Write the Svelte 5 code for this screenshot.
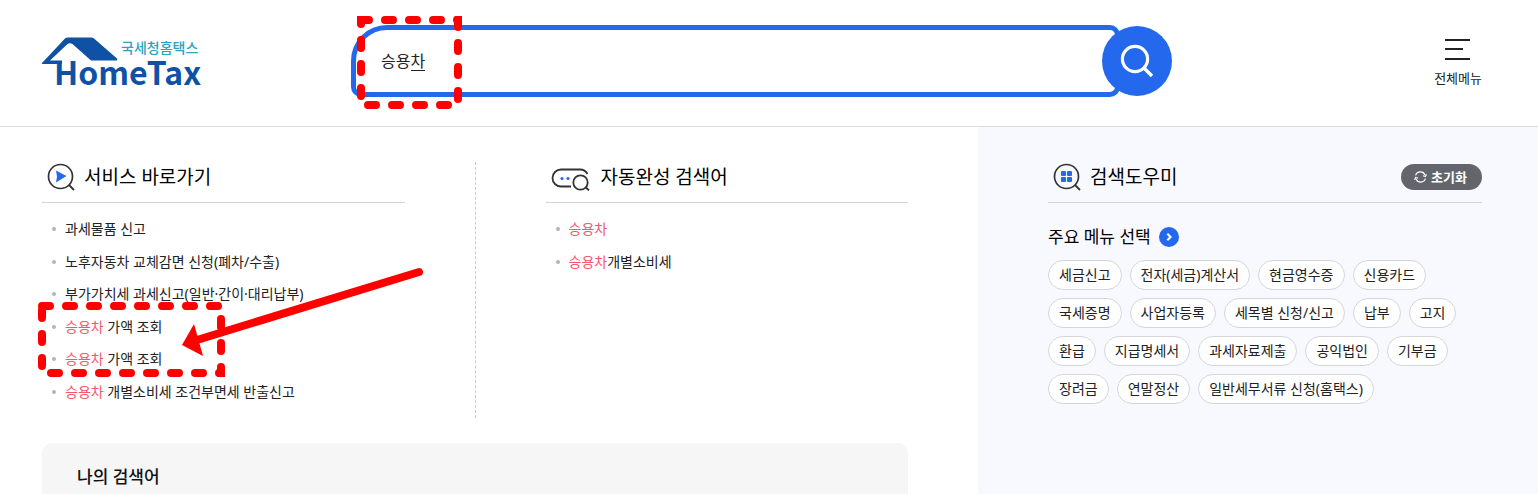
<script lang="ts">
	type Item = { hit?: string; text: string };

	const services: Item[] = [
		{ text: '과세물품 신고' },
		{ text: '노후자동차 교체감면 신청(폐차/수출)' },
		{ text: '부가가치세 과세신고(일반·간이·대리납부)' },
		{ hit: '승용차', text: ' 가액 조회' },
		{ hit: '승용차', text: ' 가액 조회' },
		{ hit: '승용차', text: ' 개별소비세 조건부면세 반출신고' }
	];

	const suggestions: Item[] = [
		{ hit: '승용차', text: '' },
		{ hit: '승용차', text: '개별소비세' }
	];

	const menus = [
		'세금신고', '전자(세금)계산서', '현금영수증', '신용카드',
		'국세증명', '사업자등록', '세목별 신청/신고', '납부', '고지',
		'환급', '지급명세서', '과세자료제출', '공익법인', '기부금',
		'장려금', '연말정산', '일반세무서류 신청(홈택스)'
	];

	let keyword = $state('승용차');
</script>

{#snippet itemList(items: Item[])}
	<ul class="item-list">
		{#each items as item}
			<li><a href="#result">{#if item.hit}<em>{item.hit}</em>{/if}{item.text}</a></li>
		{/each}
	</ul>
{/snippet}

<div class="page">
	<header class="header">
		<a class="logo" href="#home" aria-label="국세청홈택스 HomeTax">
			<svg width="160" height="56" viewBox="0 0 160 56">
				<path d="M0 28 L23 3.5 Q24 2.5 26 2.5 H49 Q51 2.5 52 3.5 L75 23.5 Q76 25.5 74 25.5 H49 L31 9.5 Q28 7 25 9.5 L8 25.5 H20 V29 H2 Q-1 29 0 28 Z" fill="#0f52a5" />
				<text class="logo-ko" x="79" y="18">국세청홈택스</text>
				<text class="logo-en" x="12" y="50">HomeTax</text>
			</svg>
		</a>

		<form class="search" onsubmit={(e) => e.preventDefault()}>
			<div class="search-box">
				<input type="text" aria-label="검색어" bind:value={keyword} />
				<span class="composing"></span>
			</div>
			<button class="search-btn" type="submit" aria-label="검색">
				<svg width="36" height="36" viewBox="0 0 36 36" fill="none" stroke="#fff">
					<circle cx="16" cy="16" r="12.6" stroke-width="3.2" />
					<path d="M25 25 L33 33" stroke-width="3.4" />
				</svg>
			</button>
		</form>

		<button class="all-menu" type="button">
			<svg width="26" height="22" viewBox="0 0 26 22" stroke="#222" stroke-width="2">
				<path d="M0 1 H25 M0 10 H18 M0 20 H25" />
			</svg>
			전체메뉴
		</button>
	</header>

	<main class="main">
		<div class="results">
			<div class="columns">
				<section>
					<div class="heading">
						<svg width="28" height="28" viewBox="0 0 28 28" fill="none">
							<circle cx="13.5" cy="13.5" r="12" stroke="#333" stroke-width="1.7" />
							<path d="M22 22 L27 27" stroke="#333" stroke-width="1.8" />
							<path d="M9 7.5 L19.5 13 L9 19.5 L10 13.5 Z" fill="#2468ee" />
						</svg>
						<h2>서비스 바로가기</h2>
					</div>
					{@render itemList(services)}
				</section>
				<div class="divider"></div>
				<section>
					<div class="heading">
						<svg width="41" height="28" viewBox="3 0 41 28" fill="none">
							<path d="M23 23.5 H13 A8.5 8.5 0 0 1 13 6.5 H32 Q37 6.5 39.5 11" stroke="#333" stroke-width="1.8" />
							<circle cx="32.5" cy="19.5" r="7.2" stroke="#333" stroke-width="1.8" />
							<path d="M37.5 24 L41 27.5" stroke="#333" stroke-width="1.8" />
							<circle cx="14" cy="15.5" r="1.6" fill="#2468ee" />
							<circle cx="20" cy="15.5" r="1.6" fill="#2468ee" />
						</svg>
						<h2>자동완성 검색어</h2>
					</div>
					{@render itemList(suggestions)}
				</section>
			</div>

			<section class="my-search">
				<h3>나의 검색어</h3>
			</section>
		</div>

		<aside class="helper">
			<div class="heading">
				<svg width="28" height="28" viewBox="0 0 28 28" fill="none">
					<circle cx="13.5" cy="13.5" r="12" stroke="#333" stroke-width="1.7" />
					<path d="M22 22 L27 27" stroke="#333" stroke-width="1.8" />
					<g fill="#2468ee">
						<rect x="8" y="8" width="5" height="5" rx="1" />
						<rect x="14" y="8" width="5" height="5" rx="1" />
						<rect x="8" y="14" width="5" height="5" rx="1" />
						<rect x="14" y="14" width="5" height="5" rx="1" />
					</g>
				</svg>
				<h2>검색도우미</h2>
				<button class="reset" type="button">
					<svg width="13" height="12" viewBox="0 0 13 12" fill="none" stroke="#fff" stroke-width="1.2">
						<path d="M1.6 4.4 A5 5 0 0 1 11 4 M11.4 7.6 A5 5 0 0 1 2 8" />
						<path d="M9 4.8 L11.4 5.6 L12.4 3.2 M4 7.2 L1.6 6.4 L0.6 8.8" />
					</svg>
					초기화
				</button>
			</div>

			<h3 class="menu-title">
				주요 메뉴 선택
				<svg width="20" height="20" viewBox="0 0 20 20" fill="none">
					<circle cx="10" cy="10" r="10" fill="#2468ee" />
					<path d="M8.3 6.8 L11.6 10 L8.3 13.2" stroke="#fff" stroke-width="2" />
				</svg>
			</h3>
			<div class="chips">
				{#each menus as menu}
					<button class="chip" type="button">{menu}</button>
				{/each}
			</div>
		</aside>
	</main>

	<!-- guide marks over the page -->
	<svg class="marks" width="470" height="380" viewBox="0 0 470 380" aria-hidden="true">
		<clipPath id="mark-input"><rect x="357" y="16" width="105" height="93" /></clipPath>
		<clipPath id="mark-list"><rect x="38" y="302" width="187" height="75" /></clipPath>
		<g class="dashes" clip-path="url(#mark-input)">
			<path d="M361 20 H465" />
			<path d="M458 19 V99" />
			<path d="M368 105 H448" />
			<path d="M361 16 V96" />
		</g>
		<g class="dashes" clip-path="url(#mark-list)">
			<path d="M42 306 H218" />
			<path d="M221 319 V375" />
			<path d="M51 373 H227" />
			<path d="M42 310 V366" />
		</g>
		<path d="M419 272 L197 340" stroke="#f00" stroke-width="8" stroke-linecap="round" />
		<path d="M182 345 L194 324 L203 356 Z" fill="#f00" />
	</svg>
</div>

<style>
	:global(body) {
		margin: 0;
		background: #fff;
	}

	.page {
		position: relative;
		display: flex;
		flex-direction: column;
		min-height: 100vh;
		color: #222;
		font-family: 'Noto Sans', 'Noto Sans CJK KR', sans-serif;
		font-size: 14px;
		line-height: 20px;
	}

	h2,
	h3,
	ul {
		margin: 0;
		padding: 0;
	}

	button,
	input {
		margin: 0;
		padding: 0;
		border: 0;
		background: none;
		color: inherit;
		font: inherit;
	}

	button {
		cursor: pointer;
	}

	svg {
		display: block;
		flex-shrink: 0;
	}

	.header {
		display: flex;
		align-items: center;
		height: 126px;
		padding: 0 56px 0 42px;
		border-bottom: 1px solid #ddd;
	}

	.logo svg {
		overflow: visible;
		font-family: 'Noto Sans CJK KR', sans-serif;
	}

	.logo-ko {
		fill: #2ba3c0;
		font-size: 14px;
		font-weight: 500;
	}

	.logo-en {
		fill: #0f52a5;
		font-size: 32px;
		font-weight: 700;
	}

	.search {
		display: flex;
		align-items: center;
		flex: 1;
		margin: 0 262px 4px 149px;
	}

	.search-box {
		position: relative;
		flex: 1;
		height: 62px;
		border: 5px solid #2468ee;
		border-radius: 36px 10px 10px 10px;
	}

	.search-box input {
		width: 100%;
		height: 60px;
		padding: 0 25px;
		box-sizing: border-box;
		font-size: 16px;
		outline: 0;
	}

	.composing {
		position: absolute;
		top: 40px;
		left: 55px;
		width: 14px;
		height: 1px;
		background: #222;
	}

	.search-btn {
		position: relative;
		display: flex;
		align-items: center;
		justify-content: center;
		width: 70px;
		height: 70px;
		margin-left: -18px;
		border-radius: 50%;
		background: #2468ee;
	}

	.all-menu {
		display: flex;
		flex-direction: column;
		align-items: center;
		gap: 7px;
		font-size: 13px;
		white-space: nowrap;
	}

	.main {
		display: grid;
		grid-template-columns: 1fr 560px;
		flex: 1;
	}

	.results {
		display: flex;
		flex-direction: column;
		padding: 35px 70px 0 42px;
	}

	.columns {
		display: grid;
		grid-template-columns: 1fr 1px 1fr;
		column-gap: 70px;
		padding-bottom: 25px;
	}

	.divider {
		border-left: 1px dashed #ccc;
	}

	.heading {
		display: flex;
		align-items: center;
		gap: 9px;
		height: 30px;
		padding: 0 0 10px 5px;
		border-bottom: 1px solid #d4d4d4;
	}

	h2 {
		color: #000;
		font-size: 19px;
		font-weight: 400;
		line-height: 28px;
	}

	.item-list {
		display: grid;
		grid-template-rows: repeat(6, 1fr);
		align-items: center;
		height: 195px;
		padding: 10px 0 10px 10px;
		list-style: none;
	}

	.item-list li {
		display: flex;
		align-items: center;
		gap: 9px;
	}

	.item-list li::before {
		content: '';
		width: 4px;
		height: 4px;
		border-radius: 50%;
		background: #b0b4bc;
	}

	.item-list a {
		color: inherit;
		text-decoration: none;
		white-space: pre;
	}

	.item-list em {
		color: #f4596a;
		font-style: normal;
	}

	.my-search {
		flex: 1;
		padding: 23px 35px 0;
		border-radius: 10px 10px 0 0;
		background: #f6f6f6;
	}

	h3 {
		color: #111;
		font-size: 17px;
		font-weight: 500;
		line-height: 22px;
	}

	.helper {
		padding: 35px 56px 0 70px;
		background: #f8f9ff;
	}

	.reset {
		display: flex;
		align-items: center;
		gap: 4px;
		height: 26px;
		margin-left: auto;
		padding: 0 15px 0 13px;
		border-radius: 13px;
		background: #62666c;
		color: #fff;
		font-size: 13px;
		font-weight: 700;
	}

	.menu-title {
		display: flex;
		align-items: center;
		gap: 8px;
		padding: 23px 0 12px;
		color: #000;
		font-weight: 400;
	}

	.chips {
		display: flex;
		flex-wrap: wrap;
		gap: 8px;
	}

	.chip {
		height: 30px;
		padding: 0 10px;
		border: 1px solid #d4d6da;
		border-radius: 15px;
		background: #fff;
	}

	.marks {
		position: absolute;
		top: 0;
		left: 0;
		pointer-events: none;
	}

	.dashes path {
		fill: none;
		stroke: #f00;
		stroke-width: 8px;
		stroke-linecap: round;
		stroke-dasharray: 8 16;
	}
</style>
